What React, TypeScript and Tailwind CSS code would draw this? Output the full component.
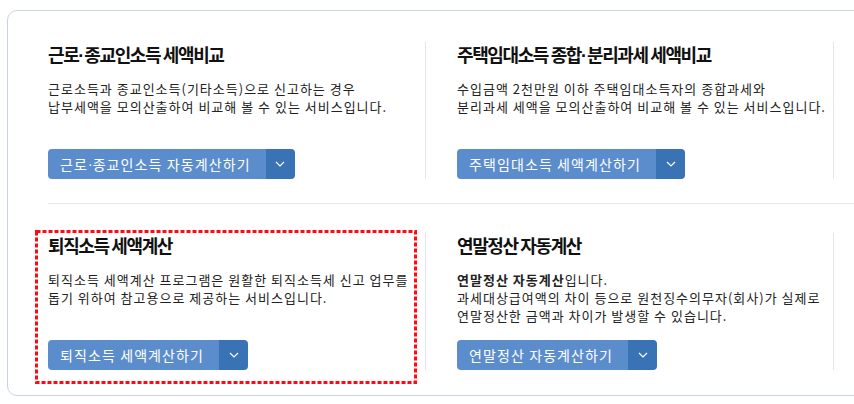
import React from "react";

interface Service {
  title: React.ReactNode;
  desc: React.ReactNode;
  button: React.ReactNode;
  highlight?: boolean;
}

// 가운뎃점은 좁은 글꼴로 표시
const Dot = () => (
  <span className="font-['Liberation_Sans',sans-serif] tracking-normal">·</span>
);

const rows: Service[][] = [
  [
    {
      title: (
        <>
          근로<Dot />종교인소득 세액비교
        </>
      ),
      desc: (
        <>
          근로소득과 종교인소득(기타소득)으로 신고하는 경우
          <br />
          납부세액을 모의산출하여 비교해 볼 수 있는 서비스입니다.
        </>
      ),
      button: (
        <>
          근로<Dot />종교인소득 자동계산하기
        </>
      ),
    },
    {
      title: (
        <>
          주택임대소득 종합<Dot />분리과세 세액비교
        </>
      ),
      desc: (
        <>
          수입금액 2천만원 이하 주택임대소득자의 종합과세와
          <br />
          분리과세 세액을 모의산출하여 비교해 볼 수 있는 서비스입니다.
        </>
      ),
      button: "주택임대소득 세액계산하기",
    },
  ],
  [
    {
      title: "퇴직소득 세액계산",
      desc: (
        <>
          퇴직소득 세액계산 프로그램은 원활한 퇴직소득세 신고 업무를
          <br />
          돕기 위하여 참고용으로 제공하는 서비스입니다.
        </>
      ),
      button: "퇴직소득 세액계산하기",
      highlight: true,
    },
    {
      title: "연말정산 자동계산",
      desc: (
        <>
          <b className="font-bold">연말정산 자동계산</b>입니다.
          <br />
          과세대상급여액의 차이 등으로 원천징수의무자(회사)가 실제로
          <br />
          연말정산한 금액과 차이가 발생할 수 있습니다.
        </>
      ),
      button: "연말정산 자동계산하기",
    },
  ],
];

const SplitButton: React.FC<{ label: React.ReactNode }> = ({ label }) => (
  <div className="flex h-[30px] w-fit overflow-hidden rounded-[4px] text-[14px] text-white">
    <span className="flex items-center bg-[#5b8dcc] pl-3 pr-[15px] tracking-[1.1px]">
      {label}
    </span>
    <span className="flex w-[29px] items-center justify-center bg-[#3a72b6]">
      <svg width="10" height="6" viewBox="0 0 10 6" fill="none">
        <polyline points="1,1 5,5 9,1" stroke="white" strokeWidth="1.2" />
      </svg>
    </span>
  </div>
);

const ServiceColumn: React.FC<{ item?: Service; first: boolean }> = ({
  item,
  first,
}) => (
  <div
    className={`relative pl-[31px] ${
      first ? "" : "border-l border-[#e6e6e6]"
    }`}
  >
    {item && (
      <>
        <h3 className="h-6 text-[18px] font-bold leading-6 tracking-[-1.4px] text-[#111]">
          {item.title}
        </h3>
        <p className="mt-[14px] h-[54px] text-[13px] leading-[18px] tracking-[1px] text-[#222]">
          {item.desc}
        </p>
        <div className="mt-[15px]">
          <SplitButton label={item.button} />
        </div>
        {/* 강조 표시 */}
        {item.highlight && (
          <svg
            className="pointer-events-none absolute left-[18px] top-[-3px]"
            width="382"
            height="154"
          >
            <rect
              x="1.5"
              y="1.5"
              width="379"
              height="151"
              fill="none"
              stroke="#ff0a14"
              strokeWidth="3"
              strokeDasharray="4 2"
            />
          </svg>
        )}
      </>
    )}
    {!item && <div className="h-[137px]" />}
  </div>
);

export default function App() {
  return (
    <div className="min-h-screen overflow-hidden bg-white pt-[10px] pl-[7px] font-['Noto_Sans_CJK_KR','Noto_Sans',sans-serif]">
      <div className="w-[1000px] rounded-[10px] border border-[#c9d4e0] bg-white">
        <div className="grid grid-cols-[408px_408px_408px] pt-[31px] pb-[24px] pl-[9px]">
          <ServiceColumn item={rows[0][0]} first />
          <ServiceColumn item={rows[0][1]} first={false} />
          <ServiceColumn first={false} />
        </div>
        <div className="ml-[40px] h-px bg-[#e8e8e8]" />
        <div className="grid grid-cols-[408px_408px_408px] pt-[29px] pb-[25px] pl-[9px]">
          <ServiceColumn item={rows[1][0]} first />
          <ServiceColumn item={rows[1][1]} first={false} />
          <ServiceColumn first={false} />
        </div>
      </div>
    </div>
  );
}
